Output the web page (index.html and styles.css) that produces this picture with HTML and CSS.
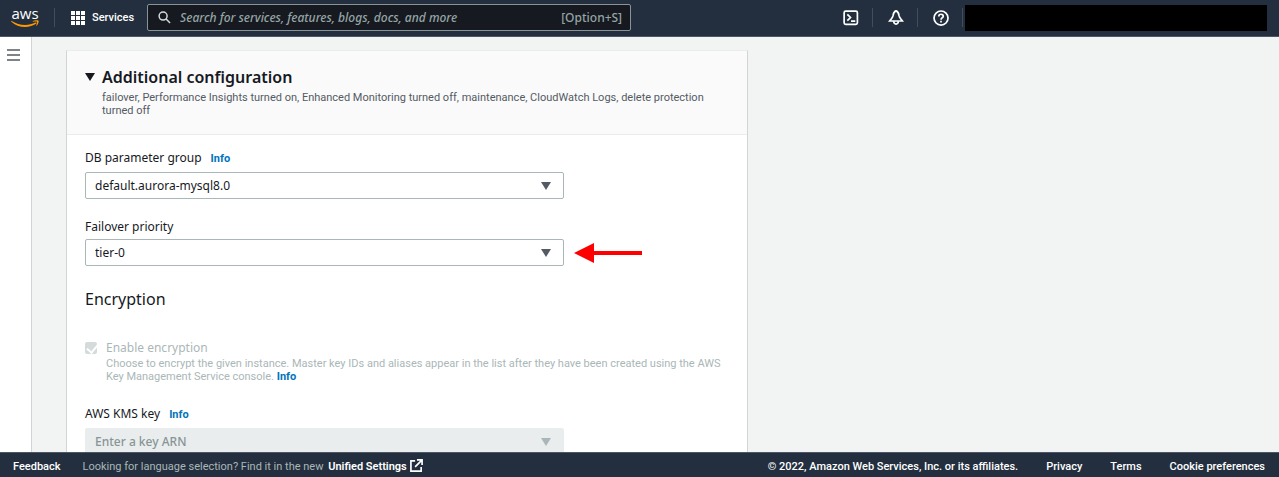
FILE: index.html
```html
<!DOCTYPE html>
<html lang="en">
<head>
<meta charset="utf-8">
<meta name="viewport" content="width=device-width, initial-scale=1">
<title>Additional configuration</title>
<link rel="stylesheet" href="styles.css">
</head>
<body class="page">
<header class="topbar">
  <a class="logo" href="#" aria-label="AWS home">
    <span class="logo-word">aws</span>
    <svg class="logo-smile" viewBox="0 0 28 8" aria-hidden="true">
      <path d="M0.3 0.8C8 5.8 17 6.2 24.6 2.6C25.4 2.2 26 3 25.3 3.5C18 8.600 7 8 0.100 1.400Z"/>
      <path d="M21.800 1.300C23.500 0.100 27 0 27.600 0.700C28 1.600 27.100 4.400 25.600 5.700C25.300 5.900 25 5.800 25.200 5.400C25.700 4.100 26.400 2.300 26 1.800C25.600 1.300 23.400 1.500 22 1.700C21.600 1.700 21.500 1.500 21.800 1.300Z"/>
    </svg>
  </a>
  <nav class="services-nav">
    <button class="services" type="button">
      <svg class="grid-icon" viewBox="0 0 14 14" aria-hidden="true"><path d="M0 0h4v4H0zM5 0h4v4H5zM10 0h4v4h-4zM0 5h4v4H0zM5 5h4v4H5zM10 5h4v4h-4zM0 10h4v4H0zM5 10h4v4H5zM10 10h4v4h-4z"/></svg>
      Services
    </button>
  </nav>
  <label class="search">
    <svg class="search-icon" viewBox="0 0 14 14" aria-hidden="true"><circle cx="5.500" cy="5.500" r="4.300"/><path d="M8.700 8.700L13 13"/></svg>
    <input class="search-input" type="search" aria-label="Search" placeholder="Search for services, features, blogs, docs, and more">
    <span class="shortcut">[Option+S]</span>
  </label>
  <div class="tools">
    <button class="tool" type="button" aria-label="CloudShell">
      <svg viewBox="0 0 16 16"><rect x="2" y="2" width="12.500" height="12.500" rx="1.500"/><path d="M5 5l3 3-3 3M8.500 11.500h4"/></svg>
    </button>
    <button class="tool" type="button" aria-label="Notifications">
      <svg viewBox="0 0 16 16"><path d="M8.500 1.800C6.100 2.500 6 4.500 5.700 6.300C5.300 8.300 4 9.300 2.500 11.300H14.500C13 9.300 11.700 8.300 11.300 6.300C11 4.500 10.900 2.500 8.500 1.800ZM6.500 11.500v1.500q2 2.400 4 0v-1.500"/></svg>
    </button>
    <button class="tool" type="button" aria-label="Support">
      <svg viewBox="0 0 16 16"><circle cx="8.500" cy="8.500" r="6.600"/><path d="M6.400 7C6.400 4.300 10.600 4.300 10.600 6.900C10.600 8.400 8.500 8.200 8.500 10M8.500 11v1.600"/></svg>
    </button>
    <div class="account"></div>
  </div>
</header>

<div class="workspace">
  <aside class="rail">
    <button class="menu" type="button" aria-label="Open navigation">
      <svg viewBox="0 0 13 12"><path d="M0 1h13M0 6h13M0 11h13"/></svg>
    </button>
  </aside>
  <main class="content">
    <section class="card">
      <div class="card-head">
        <button class="card-toggle" type="button" aria-expanded="true">
          <svg class="caret" viewBox="0 0 10 8" aria-hidden="true"><path d="M0 0h10L5 8z"/></svg>
          Additional configuration
        </button>
        <p class="card-summary">failover, Performance Insights turned on, Enhanced Monitoring turned off, maintenance, CloudWatch Logs, delete protection turned off</p>
      </div>
      <form class="card-body">
        <div class="field">
          <div class="field-label"><label for="group">DB parameter group</label><a class="info" href="#">Info</a></div>
          <div class="control">
            <select class="select" id="group"><option>default.aurora-mysql8.0</option></select>
            <svg class="caret select-caret" viewBox="0 0 10 8" aria-hidden="true"><path d="M0 0h10L5 8z"/></svg>
          </div>
        </div>
        <div class="field">
          <div class="field-label plain"><label for="priority">Failover priority</label></div>
          <div class="field-row">
            <div class="control">
              <select class="select" id="priority"><option>tier-0</option></select>
              <svg class="caret select-caret" viewBox="0 0 10 8" aria-hidden="true"><path d="M0 0h10L5 8z"/></svg>
            </div>
            <svg class="pointer" viewBox="0 0 68 20" aria-hidden="true"><path d="M0 10L20 0V8H68V12H20V20Z"/></svg>
          </div>
        </div>
        <h2 class="section-title">Encryption</h2>
        <div class="check">
          <input class="checkbox" id="encrypt" type="checkbox" checked disabled>
          <div class="check-text">
            <label class="check-label" for="encrypt">Enable encryption</label>
            <p class="check-help">Choose to encrypt the given instance. Master key IDs and aliases appear in the list after they have been created using the AWS Key Management Service console. <a class="help-link" href="#">Info</a></p>
          </div>
        </div>
        <div class="field">
          <div class="field-label"><label for="key">AWS KMS key</label><a class="info" href="#">Info</a></div>
          <div class="control">
            <select class="select" id="key" disabled><option>Enter a key ARN</option></select>
            <svg class="caret select-caret" viewBox="0 0 10 8" aria-hidden="true"><path d="M0 0h10L5 8z"/></svg>
          </div>
        </div>
      </form>
    </section>
  </main>
</div>

<footer class="footer">
  <div class="footer-start">
    <a class="footer-link" href="#">Feedback</a>
    <p class="language">Looking for language selection? Find it in the new
      <a class="footer-link settings" href="#">Unified Settings <svg class="external" viewBox="0 0 14 14" aria-hidden="true"><path d="M5.500 2H1v11h11V8.500M7.500 1H13v5.500M12.500 1.500L5.500 8.500"/></svg></a>
    </p>
  </div>
  <div class="footer-end">
    <span>© 2022, Amazon Web Services, Inc. or its affiliates.</span>
    <a class="footer-link" href="#">Privacy</a>
    <a class="footer-link" href="#">Terms</a>
    <a class="footer-link" href="#">Cookie preferences</a>
  </div>
</footer>
</body>
</html>
```
FILE: styles.css
```css
* { box-sizing: border-box; }

.page {
  margin: 0;
  height: 100vh;
  display: grid;
  grid-template-rows: auto minmax(0, 1fr) auto;
  overflow: hidden;
  background: #f2f3f3;
  color: #16191f;
  font: 12px/18px "Noto Sans", "Open Sans", sans-serif;
}

button, input, select { font: inherit; color: inherit; }
button { border: 0; padding: 0; background: none; cursor: pointer; }
a { text-decoration: none; }
p, h2 { margin: 0; }

.services, .card-summary, .info, .check-help, .footer {
  font-family: Roboto, sans-serif;
  font-size: 11px;
}

/* Top bar */
.topbar {
  display: flex;
  align-items: center;
  height: 37px;
  padding: 0 12px 1px 11px;
  background: #232f3e;
  border-bottom: 1px solid #4d5663;
  color: #fff;
}
.logo { display: flex; flex-direction: column; gap: 2px; width: 28px; color: #fff; }
.logo-word { font: 500 15px/10px "Open Sans", sans-serif; text-align: center; }
.logo-smile { width: 28px; height: 8px; fill: #f90; }
.services-nav {
  display: flex;
  align-items: center;
  height: 19px;
  margin-left: 15px;
  padding: 0 13px 0 16px;
  border-left: 1px solid #414d5c;
}
.services { display: flex; align-items: center; gap: 7px; line-height: 20px; font-weight: 500; }
.grid-icon { width: 14px; height: 14px; fill: #fff; }
.search {
  display: flex;
  align-items: center;
  flex: 0 1 484px;
  height: 27px;
  padding: 0 8px 0 10px;
  border: 1px solid #879596;
  border-radius: 2px;
  background: #16191f;
  color: #95a5a6;
}
.search-icon { width: 13px; height: 13px; fill: none; stroke: #d5dbdb; stroke-width: 1.6; }
.search-input {
  flex: 1;
  min-width: 0;
  margin-left: 9px;
  padding: 0;
  border: 0;
  outline: 0;
  background: none;
}
.search-input::placeholder { color: #95a5a6; font-style: italic; font-weight: 500; opacity: 1; }
.shortcut { font-weight: 500; }
.tools { display: flex; align-items: center; margin-left: auto; }
.tool {
  display: flex;
  align-items: center;
  justify-content: center;
  width: 45px;
  height: 19px;
  border-right: 1px solid #414d5c;
}
.tool svg { width: 17px; height: 17px; fill: none; stroke: #fff; stroke-width: 1.6; }
.account { width: 302px; height: 26px; margin-left: 2px; background: #000; }

/* Workspace */
.workspace { display: flex; min-height: 0; overflow: hidden; }
.rail {
  flex: none;
  width: 32px;
  padding: 11px 0 0 7px;
  background: #fff;
  border-right: 1px solid #d0d5d5;
}
.menu svg { display: block; width: 13px; height: 12px; stroke: #545b64; stroke-width: 1.5; }
.content { flex: 1; min-width: 0; padding: 13px 34px; }
.card { max-width: 682px; border: 1px solid #d0d5d5; border-top-color: #eaeded; background: #fff; }
.card-head { padding: 15px 35px 17px 18px; background: #fafafa; border-bottom: 1px solid #eaeded; }
.card-toggle { display: flex; align-items: center; gap: 7px; font-size: 16px; line-height: 22px; font-weight: 600; }
.caret { width: 10px; height: 8px; fill: currentColor; }
.card-summary { margin: 3px 0 0 17px; color: #545b64; line-height: 13px; }
.card-body { padding: 14px 18px 40px; }

/* Fields */
.field { margin-bottom: 19px; }
.field-label { display: flex; align-items: baseline; gap: 9px; margin-bottom: 5px; }
.field-label.plain { margin-bottom: 3px; }
.info, .help-link { color: #0073bb; font-weight: 700; }
.info { line-height: 16px; }
.field-row { display: flex; align-items: center; gap: 10px; }
.control { display: grid; align-items: center; flex: 0 1 479px; max-width: 479px; }
.select {
  grid-area: 1 / 1;
  appearance: none;
  width: 100%;
  height: 27px;
  padding: 0 9px;
  border: 1px solid #aab7b8;
  border-radius: 2px;
  background: #fff;
}
.select:disabled { border-color: #eaeded; background: #eaeded; color: #879596; opacity: 1; font-weight: 500; }
.select-caret { grid-area: 1 / 1; justify-self: end; margin-right: 13px; color: #545b64; pointer-events: none; }
.select:disabled + .select-caret { color: #aab7b8; }
.pointer { width: 68px; height: 20px; fill: #f00; }
.section-title { margin: 22px 0 29px; font-size: 16px; line-height: 22px; font-weight: 400; }
.check { display: flex; gap: 9px; margin-bottom: 22px; color: #aab7b8; }
.checkbox {
  appearance: none;
  flex: none;
  width: 12px;
  height: 12px;
  margin: 3px 0 0;
  border-radius: 2px;
  background: #d5dbdb;
}
.checkbox:checked::after {
  content: "";
  display: block;
  width: 5px;
  height: 9px;
  margin: 0 0 0 4px;
  border: solid #fff;
  border-width: 0 2px 2px 0;
  transform: rotate(40deg);
}
.check-label { display: block; line-height: 18px; }
.check-help { line-height: 13px; }

/* Footer */
.footer {
  display: flex;
  align-items: center;
  justify-content: space-between;
  height: 25px;
  padding: 4px 14px 0 13px;
  background: #232f3e;
  border-top: 1px solid #4d5663;
  color: #fff;
  font-weight: 500;
  white-space: nowrap;
}
.footer-start { display: flex; gap: 22px; }
.footer-end { display: flex; gap: 28px; }
.footer-link { color: #fff; }
.language { color: #aab7b8; font-weight: 400; }
.settings { margin-left: 2px; font-weight: 600; }
.external { width: 13px; height: 13px; vertical-align: -2px; fill: none; stroke: #fff; stroke-width: 1.8; }
```
